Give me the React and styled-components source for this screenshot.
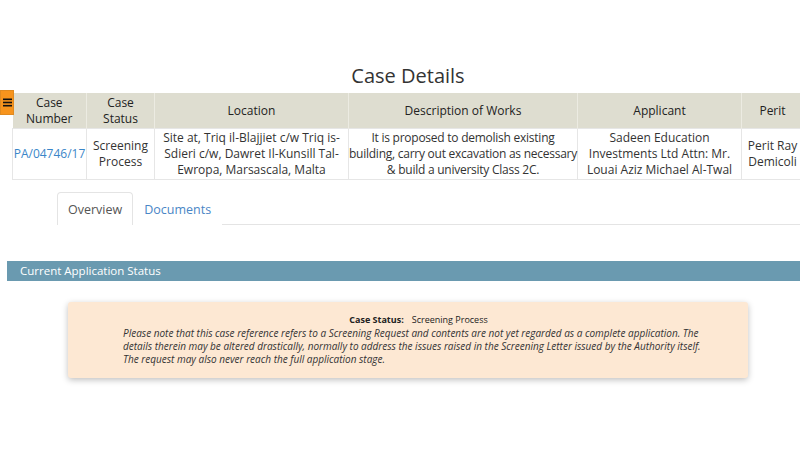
import React from 'react';
import styled, { createGlobalStyle } from 'styled-components';

const Global = createGlobalStyle`
  html, body { margin: 0; padding: 0; background: #fff; }
  body {
    width: 800px;
    height: 450px;
    overflow: hidden;
    font-family: "Open Sans", "Noto Sans", sans-serif;
    color: #333;
  }
`;

const Page = styled.div`
  position: relative;
  padding-top: 62px;
`;

const Title = styled.h1`
  margin: 0 0 3px;
  padding-left: 16px;
  text-align: center;
  font-size: 20px;
  font-weight: 400;
  line-height: 28px;
  color: #333;
`;

const TableWrap = styled.div`
  position: relative;
  margin-left: 12px;
  width: 820px;
`;

const MenuTab = styled.div`
  position: absolute;
  left: -12px;
  top: -3px;
  width: 14px;
  height: 25px;
  background: #f7941d;
  border: 1px solid #e08a20;
  box-sizing: border-box;
  display: flex;
  align-items: center;
  justify-content: center;
`;

const Table = styled.table`
  border-collapse: collapse;
  table-layout: fixed;
  width: 791px;
  font-size: 12px;
  line-height: 16px;
`;

const Th = styled.th`
  background: #deddd0;
  font-weight: 400;
  color: #222;
  height: 35px;
  padding: 0 2px;
  border-right: 1px solid #ecebe2;
  text-align: center;
`;

const Td = styled.td`
  text-align: center;
  padding: 0;
  height: 50px;
  border: 1px solid #e6e6e6;
  color: #333;
  letter-spacing: ${p => (p.$tight ? '-0.25px' : 'normal')};
`;

const Link = styled.a`
  color: #3a86c8;
  text-decoration: none;
`;

const Tabs = styled.div`
  display: flex;
  margin: 12px 0 0 57px;
  border-bottom: 1px solid #e4e4e4;
  height: 32px;
`;

const Tab = styled.div`
  padding: 0 10px;
  display: flex;
  align-items: center;
  font-size: 12.5px;
  color: ${p => (p.$active ? '#555' : '#4a86c6')};
  background: #fff;
  border: 1px solid ${p => (p.$active ? '#e4e4e4' : 'transparent')};
  border-bottom: none;
  border-radius: 4px 4px 0 0;
  margin-bottom: -1px;
  height: 33px;
  box-sizing: border-box;
  padding-top: 1px;
`;

const StatusBar = styled.div`
  margin: 36px 0 0 7px;
  height: 20px;
  background: #6a9ab0;
  color: #fff;
  font-size: 11.5px;
  line-height: 20px;
  padding-left: 13px;
`;

const Notice = styled.div`
  margin: 21px 0 0 68px;
  width: 680px;
  box-sizing: border-box;
  background: #fde8d3;
  border-radius: 3px;
  box-shadow: 0 2px 6px rgba(0, 0, 0, 0.25);
  padding: 11px 40px 12px 55px;
`;

const StatusLine = styled.div`
  display: flex;
  justify-content: center;
  gap: 8px;
  padding-left: 6px;
  font-size: 9px;
  line-height: 14px;
  color: #222;
`;

const Label = styled.span`
  font-weight: 700;
`;

const Note = styled.p`
  margin: 0;
  font-size: 10px;
  line-height: 13px;
  font-style: italic;
  color: #333;
`;

const Hamburger = () => (
  <svg width="9" height="9" viewBox="0 0 9 9">
    <rect x="0" y="0.5" width="9" height="1.6" fill="#111" />
    <rect x="0" y="3.7" width="9" height="1.6" fill="#111" />
    <rect x="0" y="6.9" width="9" height="1.6" fill="#111" />
  </svg>
);

export default function App() {
  return (
    <>
      <Global />
      <Page>
        <Title>Case Details</Title>
        <TableWrap>
          <MenuTab><Hamburger /></MenuTab>
          <Table>
            <colgroup>
              <col style={{ width: 74 }} />
              <col style={{ width: 68 }} />
              <col style={{ width: 194 }} />
              <col style={{ width: 229 }} />
              <col style={{ width: 164 }} />
              <col style={{ width: 62 }} />
            </colgroup>
            <thead>
              <tr>
                <Th>Case Number</Th>
                <Th>Case Status</Th>
                <Th>Location</Th>
                <Th>Description of Works</Th>
                <Th>Applicant</Th>
                <Th>Perit</Th>
              </tr>
            </thead>
            <tbody>
              <tr>
                <Td><Link href="#">PA/04746/17</Link></Td>
                <Td>Screening Process</Td>
                <Td>Site at, Triq il-Blajjiet c/w Triq is-Sdieri c/w, Dawret Il-Kunsill Tal-Ewropa, Marsascala, Malta</Td>
                <Td $tight>It is proposed to demolish existing building, carry out excavation as necessary &amp; build a university Class 2C.</Td>
                <Td>Sadeen Education Investments Ltd Attn: Mr. Louai Aziz Michael Al-Twal</Td>
                <Td>Perit Ray Demicoli</Td>
              </tr>
            </tbody>
          </Table>
        </TableWrap>
        <Tabs>
          <Tab $active>Overview</Tab>
          <Tab>Documents</Tab>
        </Tabs>
        <StatusBar>Current Application Status</StatusBar>
        <Notice>
          <StatusLine>
            <Label>Case Status:</Label>
            <span>Screening Process</span>
          </StatusLine>
          <Note>
            Please note that this case reference refers to a Screening Request and contents are not yet regarded as a complete application. The details therein may be altered drastically, normally to address the issues raised in the Screening Letter issued by the Authority itself. The request may also never reach the full application stage.
          </Note>
        </Notice>
      </Page>
    </>
  );
}
